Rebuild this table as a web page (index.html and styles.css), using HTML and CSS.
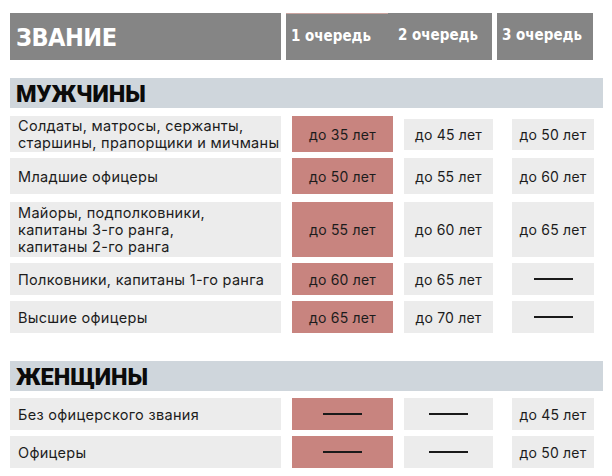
FILE: index.html
```html
<!DOCTYPE html>
<html lang="ru">
<head>
<meta charset="utf-8">
<link rel="stylesheet" href="styles.css">
</head>
<body>
<div class="page">
  <div class="head">
    <div class="h-title">ЗВАНИЕ</div>
    <div class="h-col h-col1">1 очередь</div>
    <div class="h-col h-col2">2 очередь</div>
    <div class="h-col h-col3">3 очередь</div>
  </div>

  <div class="section s-men">МУЖЧИНЫ</div>
  <div class="rows">
    <div class="row r-a">
      <div class="label">Солдаты, матросы, сержанты,<br>старшины, прапорщики и мичманы</div>
      <div class="cell c1">до 35 лет</div>
      <div class="cell c2 inset">до 45 лет</div>
      <div class="cell c3 inset">до 50 лет</div>
    </div>
    <div class="row r-b">
      <div class="label">Младшие офицеры</div>
      <div class="cell c1">до 50 лет</div>
      <div class="cell c2">до 55 лет</div>
      <div class="cell c3">до 60 лет</div>
    </div>
    <div class="row r-c">
      <div class="label">Майоры, подполковники,<br>капитаны 3-го ранга,<br>капитаны 2-го ранга</div>
      <div class="cell c1">до 55 лет</div>
      <div class="cell c2">до 60 лет</div>
      <div class="cell c3">до 65 лет</div>
    </div>
    <div class="row r-d">
      <div class="label">Полковники, капитаны 1-го ранга</div>
      <div class="cell c1">до 60 лет</div>
      <div class="cell c2">до 65 лет</div>
      <div class="cell c3"><span class="dash"></span></div>
    </div>
    <div class="row r-d">
      <div class="label">Высшие офицеры</div>
      <div class="cell c1">до 65 лет</div>
      <div class="cell c2">до 70 лет</div>
      <div class="cell c3"><span class="dash"></span></div>
    </div>
  </div>

  <div class="section s-women">ЖЕНЩИНЫ</div>
  <div class="rows">
    <div class="row r-d">
      <div class="label">Без офицерского звания</div>
      <div class="cell c1"><span class="dash"></span></div>
      <div class="cell c2"><span class="dash"></span></div>
      <div class="cell c3">до 45 лет</div>
    </div>
    <div class="row r-d">
      <div class="label">Офицеры</div>
      <div class="cell c1"><span class="dash"></span></div>
      <div class="cell c2"><span class="dash"></span></div>
      <div class="cell c3">до 50 лет</div>
    </div>
  </div>
</div>
</body>
</html>
```

FILE: styles.css
```css
* { box-sizing: border-box; }
html, body { margin: 0; padding: 0; background: #ffffff; }
body {
  width: 612px;
  height: 476px;
  overflow: hidden;
  font-family: Inter, "Noto Sans", sans-serif;
  color: #1c1c1c;
}
.page {
  padding: 13px 0 0 10px;
}

.head {
  display: grid;
  grid-template-columns: 271px 107px 104px 101px;
  height: 47px;
}
.h-title {
  background: #858585;
  color: #ffffff;
  font-family: "DejaVu Sans Condensed", "DejaVu Sans", sans-serif;
  font-weight: bold;
  font-size: 25px;
  letter-spacing: -0.5px;
  display: flex;
  align-items: center;
  padding-left: 6px;
  padding-top: 2px;
}
.h-col {
  background: #858585;
  color: #ffffff;
  font-family: "DejaVu Sans Condensed", "DejaVu Sans", sans-serif;
  font-weight: bold;
  font-size: 15px;
  display: flex;
  align-items: center;
  padding-bottom: 3px;
}
.h-col1 {
  margin-left: 5px;
  padding-left: 5px;
  border-top: 1px solid #c9a49f;
}
.h-col2 {
  padding-left: 10px;
}
.h-col3 {
  margin-left: 5px;
  padding-left: 5px;
}

.section {
  width: 593px;
  height: 30px;
  background: #cfd6dc;
  color: #0b0b0b;
  font-family: Roboto, "Liberation Sans", sans-serif;
  font-weight: 900;
  font-size: 23.5px;
  display: flex;
  align-items: center;
  padding-left: 6px;
  padding-top: 1px;
}
.s-men { margin-top: 18px; }
.s-women { margin-top: 28px; }

.rows {
  display: flex;
  flex-direction: column;
  gap: 6px;
  margin-top: 8px;
}
.s-women + .rows { margin-top: 7px; }

.row {
  display: grid;
  grid-template-columns: 271px 101px 89px 90px;
  column-gap: 11px;
  font-size: 14px;
  line-height: 17px;
}
.row .c3 { margin-left: 8px; }
.r-a { height: 36px; }
.r-b { height: 36px; }
.r-c { height: 55px; margin-top: 2px; }
.r-d { height: 32px; }

.label {
  background: #ececec;
  display: flex;
  align-items: center;
  padding-left: 8px;
  font-size: 14.5px;
  letter-spacing: 0.3px;
}
.cell {
  background: #ececec;
  display: flex;
  align-items: center;
  justify-content: center;
  letter-spacing: 0.2px;
}
.c1 { background: #c8847f; }
.inset { margin: 3px 0 2px; }

.dash {
  display: inline-block;
  width: 39px;
  height: 1.5px;
  background: #1a1a1a;
}
```
